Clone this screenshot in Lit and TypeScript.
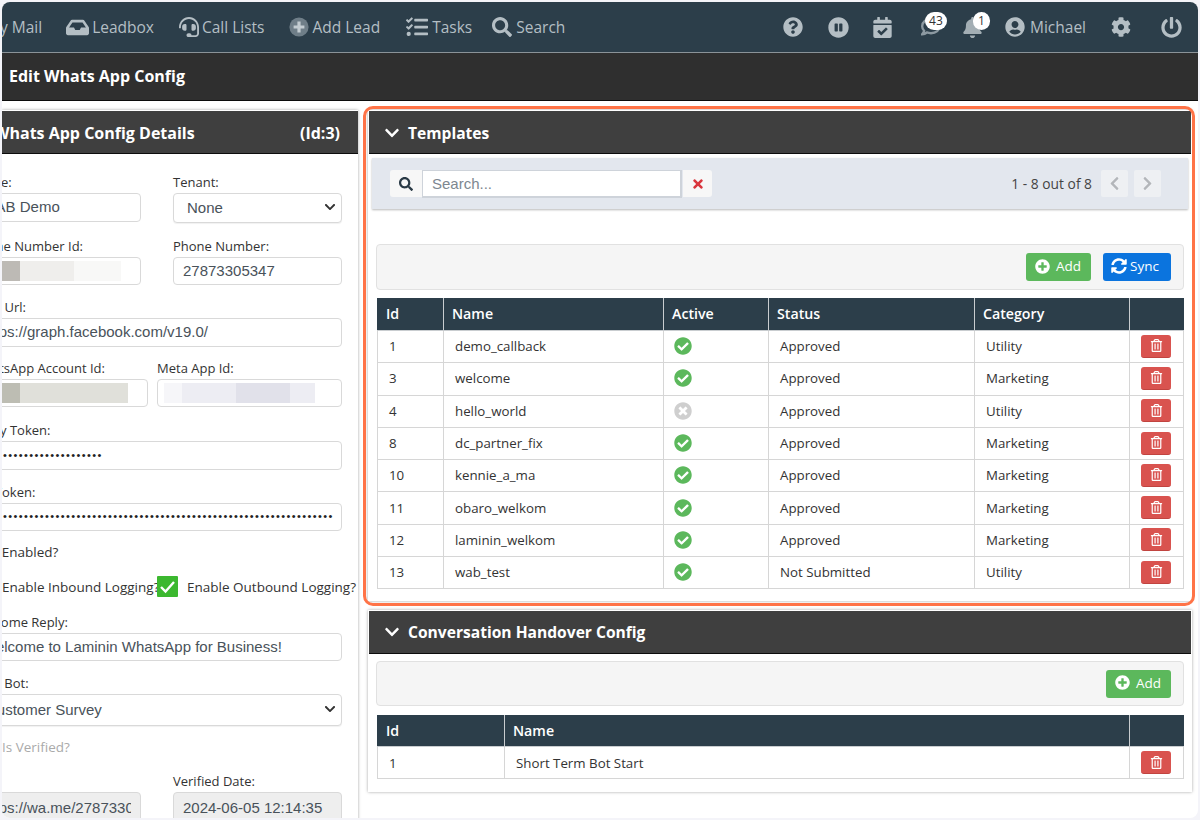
import { LitElement, html, css, svg } from "lit";
import { customElement } from "lit/decorators.js";

const P: Record<string, [number, string]> = {
  check: [512, "M504 256c0 136.967-111.033 248-248 248S8 392.967 8 256 119.033 8 256 8s248 111.033 248 248zM227.314 387.314l184-184c6.248-6.248 6.248-16.379 0-22.627l-22.627-22.627c-6.248-6.249-16.379-6.249-22.628 0L216 308.118l-70.059-70.059c-6.248-6.248-16.379-6.248-22.628 0l-22.627 22.627c-6.248 6.248-6.248 16.379 0 22.627l104 104c6.249 6.249 16.379 6.249 22.628.001z"],
  timesc: [512, "M256 8C119 8 8 119 8 256s111 248 248 248 248-111 248-248S393 8 256 8zm121.6 313.1c4.7 4.7 4.7 12.3 0 17L338 377.6c-4.7 4.7-12.3 4.7-17 0L256 312l-65.1 65.6c-4.7 4.7-12.3 4.7-17 0L134.4 338c-4.7-4.7-4.7-12.3 0-17l65.6-65-65.6-65.1c-4.7-4.7-4.7-12.3 0-17l39.6-39.6c4.7-4.7 12.3-4.7 17 0l65 65.7 65.1-65.6c4.7-4.7 12.3-4.7 17 0l39.6 39.6c4.7 4.7 4.7 12.3 0 17L312 256l65.6 65.1z"],
  plus: [512, "M256 8C119 8 8 119 8 256s111 248 248 248 248-111 248-248S393 8 256 8zm144 276c0 6.6-5.4 12-12 12h-92v92c0 6.6-5.4 12-12 12h-56c-6.6 0-12-5.4-12-12v-92h-92c-6.6 0-12-5.4-12-12v-56c0-6.6 5.4-12 12-12h92v-92c0-6.6 5.4-12 12-12h56c6.6 0 12 5.4 12 12v92h92c6.6 0 12 5.4 12 12v56z"],
  search: [512, "M505 442.7L405.3 343c-4.5-4.5-10.6-7-17-7H372c27.6-35.3 44-79.7 44-128C416 93.1 322.9 0 208 0S0 93.1 0 208s93.1 208 208 208c48.3 0 92.7-16.4 128-44v16.3c0 6.4 2.5 12.5 7 17l99.7 99.7c9.4 9.4 24.6 9.4 33.9 0l28.3-28.3c9.4-9.4 9.4-24.6.1-34zM208 336c-70.7 0-128-57.2-128-128 0-70.7 57.2-128 128-128 70.7 0 128 57.2 128 128 0 70.7-57.2 128-128 128z"],
  times: [352, "M242.72 256l100.07-100.07c12.28-12.28 12.28-32.19 0-44.48l-22.24-22.24c-12.28-12.28-32.19-12.28-44.48 0L176 189.28 75.93 89.21c-12.28-12.28-32.19-12.28-44.48 0L9.21 111.45c-12.28 12.28-12.28 32.19 0 44.48L109.28 256 9.21 356.07c-12.28 12.28-12.28 32.19 0 44.48l22.24 22.24c12.28 12.28 32.2 12.28 44.48 0L176 322.72l100.07 100.07c12.28 12.28 32.2 12.28 44.48 0l22.24-22.24c12.28-12.28 12.28-32.19 0-44.48L242.72 256z"],
  down: [448, "M207.029 381.476L12.686 187.132c-9.373-9.373-9.373-24.569 0-33.941l22.667-22.667c9.357-9.357 24.522-9.375 33.901-.04L224 284.505l154.745-154.021c9.379-9.335 24.544-9.317 33.901.04l22.667 22.667c9.373 9.373 9.373 24.569 0 33.941L240.971 381.476c-9.373 9.372-24.569 9.372-33.942 0z"],
  left: [320, "M34.52 239.03L228.87 44.69c9.37-9.37 24.57-9.37 33.94 0l22.67 22.67c9.36 9.36 9.37 24.52.04 33.9L131.49 256l154.02 154.75c9.34 9.38 9.32 24.54-.04 33.9l-22.67 22.67c-9.37 9.37-24.57 9.37-33.94 0L34.52 272.97c-9.37-9.37-9.37-24.57 0-33.94z"],
  right: [320, "M285.476 272.971L91.132 467.314c-9.373 9.373-24.569 9.373-33.941 0l-22.667-22.667c-9.357-9.357-9.375-24.522-.04-33.901L188.505 256 34.484 101.255c-9.335-9.379-9.317-24.544.04-33.901l22.667-22.667c9.373-9.373 24.569-9.373 33.941 0L285.475 239.03c9.373 9.372 9.373 24.568.001 33.941z"],
  trash: [448, "M268 416h24a12 12 0 0 0 12-12V188a12 12 0 0 0-12-12h-24a12 12 0 0 0-12 12v216a12 12 0 0 0 12 12zM432 80h-82.41l-34-56.7A48 48 0 0 0 274.41 0H173.59a48 48 0 0 0-41.16 23.3L98.41 80H16A16 16 0 0 0 0 96v16a16 16 0 0 0 16 16h16v336a48 48 0 0 0 48 48h288a48 48 0 0 0 48-48V128h16a16 16 0 0 0 16-16V96a16 16 0 0 0-16-16zM171.84 50.91A6 6 0 0 1 177 48h94a6 6 0 0 1 5.15 2.91L293.61 80H154.39zM368 464H80V128h288zm-212-48h24a12 12 0 0 0 12-12V188a12 12 0 0 0-12-12h-24a12 12 0 0 0-12 12v216a12 12 0 0 0 12 12z"],
  sync: [512, "M370.72 133.28C339.458 104.008 298.888 87.962 255.848 88c-77.458.068-144.328 53.178-162.791 126.85-1.344 5.363-6.122 9.15-11.651 9.15H24.103c-7.498 0-13.194-6.807-11.807-14.176C33.933 94.924 134.813 8 256 8c66.448 0 126.791 26.136 171.315 68.685L463.03 40.97C478.149 25.851 504 36.559 504 57.941V192c0 13.255-10.745 24-24 24H345.941c-21.382 0-32.09-25.851-16.971-40.971l41.75-41.749zM32 296h134.059c21.382 0 32.09 25.851 16.971 40.971l-41.75 41.75c31.262 29.273 71.835 45.319 114.876 45.28 77.418-.07 144.315-53.144 162.787-126.849 1.344-5.363 6.122-9.15 11.651-9.15h57.304c7.498 0 13.194 6.807 11.807 14.176C478.067 417.076 377.187 504 256 504c-66.448 0-126.791-26.136-171.315-68.685L48.97 471.03C33.851 486.149 8 475.441 8 454.059V320c0-13.255 10.745-24 24-24z"],
  question: [512, "M504 256c0 136.997-111.043 248-248 248S8 392.997 8 256C8 119.083 119.043 8 256 8s248 111.083 248 248zM262.655 90c-54.497 0-89.255 22.957-116.549 63.758-3.536 5.286-2.353 12.415 2.715 16.258l34.699 26.31c5.205 3.947 12.621 3.008 16.665-2.122 17.864-22.658 30.113-35.797 57.303-35.797 20.429 0 45.698 13.148 45.698 32.958 0 14.976-12.363 22.667-32.534 33.976C247.128 238.528 216 254.941 216 296v4c0 6.627 5.373 12 12 12h56c6.627 0 12-5.373 12-12v-1.333c0-28.462 83.186-29.647 83.186-106.667 0-58.002-60.165-102-116.531-102zM256 338c-25.365 0-46 20.635-46 46 0 25.364 20.635 46 46 46s46-20.636 46-46c0-25.365-20.635-46-46-46z"],
  pause: [512, "M256 8C119 8 8 119 8 256s111 248 248 248 248-111 248-248S393 8 256 8zm-16 328c0 8.8-7.2 16-16 16h-48c-8.8 0-16-7.2-16-16V176c0-8.8 7.2-16 16-16h48c8.8 0 16 7.2 16 16v160zm112 0c0 8.8-7.2 16-16 16h-48c-8.8 0-16-7.2-16-16V176c0-8.8 7.2-16 16-16h48c8.8 0 16 7.2 16 16v160z"],
  calendar: [448, "M436 160H12c-6.627 0-12-5.373-12-12v-36c0-26.51 21.49-48 48-48h48V12c0-6.627 5.373-12 12-12h40c6.627 0 12 5.373 12 12v52h128V12c0-6.627 5.373-12 12-12h40c6.627 0 12 5.373 12 12v52h48c26.51 0 48 21.49 48 48v36c0 6.627-5.373 12-12 12zM12 192h424c6.627 0 12 5.373 12 12v260c0 26.51-21.49 48-48 48H48c-26.51 0-48-21.49-48-48V204c0-6.627 5.373-12 12-12zm333.296 95.947l-28.169-28.398c-4.667-4.705-12.265-4.736-16.97-.068L194.12 364.665l-45.98-46.352c-4.667-4.705-12.266-4.736-16.971-.068l-28.397 28.17c-4.705 4.667-4.736 12.265-.068 16.97l82.601 83.269c4.667 4.705 12.265 4.736 16.97.068l142.953-141.805c4.705-4.667 4.736-12.265.068-16.97z"],
  user: [496, "M248 8C111 8 0 119 0 256s111 248 248 248 248-111 248-248S385 8 248 8zm0 96c48.6 0 88 39.4 88 88s-39.4 88-88 88-88-39.4-88-88 39.4-88 88-88zm0 344c-58.7 0-111.3-26.6-146.5-68.2 18.8-35.4 55.6-59.8 98.5-59.8 2.4 0 4.8.4 7.1 1.1 13 4.2 26.6 6.9 40.9 6.9 14.3 0 28-2.7 40.9-6.9 2.3-.7 4.7-1.1 7.1-1.1 42.9 0 79.7 24.4 98.5 59.8C359.3 421.4 306.7 448 248 448z"],
  bell: [448, "M224 512c35.32 0 63.97-28.65 63.97-64H160.03c0 35.35 28.65 64 63.97 64zm215.39-149.71c-19.32-20.76-55.47-51.99-55.47-154.29 0-77.7-54.48-139.9-127.94-155.16V32c0-17.67-14.32-32-31.98-32s-31.98 14.33-31.98 32v20.84C118.56 68.1 64.08 130.3 64.08 208c0 102.3-36.15 133.53-55.47 154.29-6 6.45-8.66 14.16-8.61 21.71.11 16.4 12.98 32 32.1 32h383.8c19.12 0 32-15.6 32.1-32 .05-7.55-2.61-15.27-8.61-21.71z"],
  cog: [512, "M487.4 315.7l-42.6-24.6c4.3-23.2 4.3-47 0-70.2l42.6-24.6c4.9-2.8 7.1-8.6 5.5-14-11.1-35.6-30-67.8-54.7-94.6-3.8-4.1-10-5.1-14.8-2.3L380.8 110c-17.9-15.4-38.5-27.3-60.8-35.1V25.8c0-5.6-3.9-10.5-9.4-11.7-36.7-8.2-74.3-7.8-109.2 0-5.5 1.2-9.4 6.1-9.4 11.7V75c-22.2 7.9-42.8 19.8-60.8 35.1L88.7 85.5c-4.9-2.8-11-1.9-14.8 2.3-24.7 26.7-43.6 58.9-54.7 94.6-1.7 5.4.6 11.2 5.5 14L67.3 221c-4.3 23.2-4.3 47 0 70.2l-42.6 24.6c-4.9 2.8-7.1 8.6-5.5 14 11.1 35.6 30 67.8 54.7 94.6 3.8 4.1 10 5.1 14.8 2.3l42.6-24.6c17.9 15.4 38.5 27.3 60.8 35.1v49.2c0 5.6 3.9 10.5 9.4 11.7 36.7 8.2 74.3 7.8 109.2 0 5.5-1.2 9.4-6.1 9.4-11.7v-49.2c22.2-7.9 42.8-19.8 60.8-35.1l42.6 24.6c4.9 2.8 11 1.9 14.8-2.3 24.7-26.7 43.6-58.9 54.7-94.6 1.5-5.5-.7-11.3-5.6-14.1zM256 336c-44.1 0-80-35.9-80-80s35.9-80 80-80 80 35.9 80 80-35.9 80-80 80z"],
  power: [512, "M400 54.1c63 45 104 118.6 104 201.9 0 136.8-110.8 247.7-247.5 248C120 504.3 8.2 393 8 256.4 7.9 173.1 48.9 99.3 111.8 54.2c11.7-8.3 28-4.8 35 7.7L162.6 90c5.9 10.5 3.1 23.8-6.6 31-41.5 30.8-68 79.6-68 134.9-.1 92.3 74.5 168.1 168 168.1 91.6 0 168.6-74.2 168-169.1-.3-51.8-24.7-101.8-68.1-134-9.7-7.2-12.4-20.5-6.5-30.9l15.8-28.1c7-12.4 23.2-16.1 34.8-7.8zM296 264V24c0-13.3-10.7-24-24-24h-32c-13.3 0-24 10.7-24 24v240c0 13.3 10.7 24 24 24h32c13.3 0 24-10.7 24-24z"],
  inbox: [576, "M567.938 243.908L462.25 85.374A48.003 48.003 0 0 0 422.311 64H153.689a48 48 0 0 0-39.938 21.374L8.062 243.908A47.994 47.994 0 0 0 0 270.533V400c0 26.51 21.49 48 48 48h480c26.51 0 48-21.49 48-48V270.533a47.994 47.994 0 0 0-8.062-26.625zM162.252 128h251.497l85.333 128H376l-32 64H232l-32-64H76.918l85.334-128z"],
  headset: [512, "M192 208c0-17.67-14.33-32-32-32h-16c-35.35 0-64 28.65-64 64v48c0 35.35 28.65 64 64 64h16c17.67 0 32-14.33 32-32V208zm176 144c35.35 0 64-28.65 64-64v-48c0-35.35-28.65-64-64-64h-16c-17.67 0-32 14.33-32 32v112c0 17.67 14.33 32 32 32h16zM256 0C113.18 0 4.58 118.83 0 256v16c0 8.84 7.16 16 16 16h16c8.84 0 16-7.16 16-16v-16c0-114.69 93.31-208 208-208s208 93.31 208 208h-.12c.08 2.43.12 165.72.12 165.72 0 23.35-18.93 42.28-42.28 42.28H320c0-26.51-21.49-48-48-48h-32c-26.51 0-48 21.49-48 48s21.49 48 48 48h181.72c49.86 0 90.28-40.42 90.28-90.28V256C507.42 118.83 398.82 0 256 0z"],
  tasks: [512, "M139.61 35.5a12 12 0 0 0-17 0L58.93 98.81l-22.7-22.12a12 12 0 0 0-17 0L3.53 92.41a12 12 0 0 0 0 17l47.59 47.4a12.78 12.78 0 0 0 17.61 0l15.59-15.62L156.52 69a12.09 12.09 0 0 0 .09-17zm0 159.19a12 12 0 0 0-17 0l-63.68 63.72-22.7-22.1a12 12 0 0 0-17 0L3.53 252a12 12 0 0 0 0 17L51 316.5a12.77 12.77 0 0 0 17.6 0l15.7-15.69 72.2-72.22a12 12 0 0 0 .09-16.9zM64 368c-26.49 0-48.59 21.5-48.59 48S37.53 464 64 464a48 48 0 0 0 0-96zm432 16H208a16 16 0 0 0-16 16v32a16 16 0 0 0 16 16h288a16 16 0 0 0 16-16v-32a16 16 0 0 0-16-16zm0-320H208a16 16 0 0 0-16 16v32a16 16 0 0 0 16 16h288a16 16 0 0 0 16-16V80a16 16 0 0 0-16-16zm0 160H208a16 16 0 0 0-16 16v32a16 16 0 0 0 16 16h288a16 16 0 0 0 16-16v-32a16 16 0 0 0-16-16z"],
};

function icon(name: string, size: number) {
  const [w, d] = P[name];
  return html`<svg class="ic" width=${size} height=${size} viewBox="0 0 ${w} 512" fill="currentColor">${svg`<path d=${d}></path>`}</svg>`;
}

const chat = html`<svg class="ic chat" width="20" height="20" viewBox="0 0 512 512" fill="none" stroke="currentColor" stroke-width="60">${svg`<path d="M256 50C130 50 30 130 30 235c0 45 19 85 50 116-9 35-30 66-50 90 40-3 85-18 118-45 33 12 70 19 108 19 126 0 226-80 226-180S382 50 256 50z"></path>`}</svg>`;

const navPlus = html`<svg class="ic" width="20" height="20" viewBox="0 0 20 20">${svg`<circle cx="10" cy="10" r="9.6" fill="#6f7e88"></circle><path d="M8.4 4.6h3.2v3.8h3.8v3.2h-3.8v3.8H8.4v-3.8H4.6V8.4h3.8z" fill="#c3ccd1"></path>`}</svg>`;

const TEMPLATES: [string, string, boolean, string, string][] = [
  ["1", "demo_callback", true, "Approved", "Utility"],
  ["3", "welcome", true, "Approved", "Marketing"],
  ["4", "hello_world", false, "Approved", "Utility"],
  ["8", "dc_partner_fix", true, "Approved", "Marketing"],
  ["10", "kennie_a_ma", true, "Approved", "Marketing"],
  ["11", "obaro_welkom", true, "Approved", "Marketing"],
  ["12", "laminin_welkom", true, "Approved", "Marketing"],
  ["13", "wab_test", true, "Not Submitted", "Utility"],
];

@customElement("app-root")
export class AppRoot extends LitElement {
  static styles = css`
    :host { display: block; width: 1200px; height: 820px; background: #f4f4f9; overflow: hidden;
      font-family: "Open Sans", "Noto Sans", sans-serif; color: #333; font-size: 13px; }
    * { box-sizing: border-box; }
    .ic { display: block; flex: none; }
    .frame { position: relative; margin: 2px 2px 0; width: 1196px; height: 816px; background: #fff; border-radius: 8px; overflow: hidden; }

    .nav { height: 51px; background: #2c3e4a; border-bottom: 1px solid #8b9398; display: flex; align-items: center; color: #b4bec4; font-size: 15.5px; padding-right: 16px; white-space: nowrap; }
    .navl { display: flex; align-items: center; margin-left: -16px; }
    .navr { display: flex; align-items: center; margin-left: auto; }
    .ni { display: flex; align-items: center; gap: 3px; position: relative; }
    .chat { color: #8c99a1; }
    .dim { color: #a3aeb4; }
    .g5 { gap: 5px; }
    .g4 { gap: 4px; }
    .badge { position: absolute; background: #fff; color: #333; font-size: 12px; line-height: 18px; height: 18px; border-radius: 9px; text-align: center; }
    .b43 { left: 4px; top: -5px; width: 22px; }
    .b1 { left: 11px; top: -5px; width: 17px; }
    .title { height: 48px; background: #2f2f2f; border-bottom: 1px solid #0c0c0c; display: flex; align-items: center; padding: 0 0 2px 7px; color: #fff; font-weight: 700; font-size: 16px; }

    .main { display: flex; align-items: flex-start; gap: 10px; padding: 9px 6px 0 0; }
    .left { width: 356px; height: 720px; flex: none; background: #fff; box-shadow: 0 0 3px rgba(0,0,0,.35); overflow: hidden; }
    .right { width: 824px; flex: none; display: flex; flex-direction: column; gap: 9px; }
    .phead { height: 43px; margin-top: 1px; background: #3f3f3f; border-bottom: 1px solid #0c0c0c; color: #fff; font-weight: 700; font-size: 15.6px; display: flex; align-items: center; white-space: nowrap; padding-top: 1px; }
    .lhead { justify-content: space-between; padding-right: 18px; margin-left: -8px; font-size: 16px; }
    .form { margin-left: -30px; width: 370px; padding-top: 20px; font-size: 13px; }
    .row { display: flex; gap: 32px; }
    .col { flex: 1 1 0; min-width: 0; }
    .row.acct { gap: 9px; }
    .acct .c1 { flex: none; width: 176px; }
    .lab { height: 19px; line-height: 17px; white-space: nowrap; }
    .inp { height: 28px; border: 1px solid #d9d9d9; border-radius: 4px; font-family: "Liberation Sans", Arial, sans-serif; font-size: 15px; color: #49525a; padding: 0 9px 2px; display: flex; align-items: center; overflow: hidden; white-space: nowrap; background: #fff; }
    .h29 { height: 29px; }
    .sel { justify-content: space-between; padding: 0 5px 2px 13px; box-shadow: 0 1px 1px rgba(0,0,0,.06); }
    .dis { background: #eeeeee; height: 32px; }
    .clip { overflow: hidden; display: block; width: 100%; }
    .dots { color: #222; font-size: 11px; letter-spacing: 1.4px; }
    .blur { display: flex; height: 20px; flex: none; position: relative; top: 1px; }
    .blur i { display: block; height: 100%; }
    .chk { display: flex; align-items: center; height: 21px; white-space: nowrap; font-size: 13.5px; }
    .t20 { height: 20px; line-height: 20px; white-space: nowrap; font-size: 13.5px; }
    .pad { padding-left: 30px; }
    .pad2 { padding-left: 16px; }
    .muted { color: #aaa; }
    .cb { width: 21px; height: 21px; background: #3cb82f; color: #fff; display: flex; align-items: center; justify-content: center; flex: none; margin: 0 9px 0 -2px; border-radius: 1px; }
    .il { width: 157px; flex: none; }
    .chev { color: #333; }

    .panel { background: #fff; box-shadow: 0 0 3px rgba(0,0,0,.35); }
    .rhead { padding-left: 15px; gap: 8px; margin-left: 1px; margin-right: 1px; }
    .p2 .rhead { padding-top: 0; }
    .bar { margin: 4px 4px 0; height: 51px; background: #e3e7ee; box-shadow: 0 1px 2px rgba(0,0,0,.28); display: flex; align-items: center; padding: 0 27px 0 18px; }
    .addon { height: 27px; background: #f7f7f7; display: flex; align-items: center; justify-content: center; color: #2a3a46; }
    .a1 { width: 32px; border-radius: 3px 0 0 3px; }
    .a2 { width: 29px; border-radius: 0 3px 3px 0; color: #d9363e; margin-left: 1px; }
    .sinp { width: 260px; height: 28px; background: #fff; border: 2px solid #ced3da; border-width: 1px 2px 2px 1px; font-family: "Liberation Sans", Arial, sans-serif; font-size: 15px; color: #7d8790; display: flex; align-items: center; padding-left: 9px; }
    .count { margin-left: auto; margin-right: 9px; font-size: 13.8px; color: #444; }
    .pg { width: 27px; height: 27px; background: #eef0f3; color: #b3b6ba; display: flex; align-items: center; justify-content: center; border-radius: 2px; }
    .pg + .pg { margin-left: 6px; }
    .well { height: 46px; margin: 0 8px; background: #f5f5f5; border: 1px solid #e1e1e1; border-radius: 4px; display: flex; align-items: center; justify-content: flex-end; padding-right: 12px; gap: 12px; }
    .btn { height: 28px; border-radius: 3px; color: #fff; display: flex; align-items: center; font-size: 13.5px; font-weight: 500; padding-bottom: 2px; }
    .add { width: 65px; background: #5cb85c; padding-left: 9px; gap: 6px; }
    .sync { width: 68px; background: #0b74de; padding-left: 8px; gap: 3px; }
    .s35 { margin-top: 35px; }
    .s7 { margin-top: 7px; height: 45px; }
    .tw { margin: 8px 0 0 9px; }
    .tw2 { margin-top: 9px; }
    table { border-collapse: collapse; width: 806px; table-layout: fixed; font-size: 13.3px; }
    th { background: #2c3e4a; color: #fff; font-weight: 600; font-size: 14.2px; text-align: left; padding: 0 8px 2px; height: 32px; border: 1px solid #c9cdd0; border-top-color: #2c3e4a; }
    th:first-child { border-left-color: #2c3e4a; }
    th:last-child { border-right-color: #2c3e4a; }
    td { height: 32.3px; padding: 0 0 1px 11px; border: 1px solid #d6d6d6; color: #333; }
    .one th { height: 31px; }
    .one td { height: 32px; padding-bottom: 0; }
    .acell { padding-left: 11px; }
    .tc { padding-left: 10px; }
    .on { color: #5cb85c; display: block; }
    .off { color: #cfcfcf; display: block; }
    .del { width: 30px; height: 23px; background: #d9534f; border-bottom: 1px solid #c14440; border-radius: 3px; color: #fff; display: flex; align-items: center; justify-content: center; }
    .p1 { padding-bottom: 12px; }
    .p2 { padding-bottom: 13px; }
    .hl { position: absolute; left: 361px; top: 104px; width: 832px; height: 500px; border: 3.5px solid #ff7347; border-radius: 10px; pointer-events: none; }
  `;

  field(label: string, cls: string, body: unknown) {
    return html`<div class="col ${cls}"><div class="lab">${label}</div>${body}</div>`;
  }
  chev() { return html`<span class="chev">${icon("down", 12)}</span>`; }
  blur(parts: [number, string][]) {
    return html`<div class="blur">${parts.map(([w, c]) => html`<i style="width:${w}px;background:${c}"></i>`)}</div>`;
  }
  dots(n: number) { return html`<span class="dots">${"•".repeat(n)}</span>`; }

  table(head: string[], widths: number[], rows: unknown[], cls = "") {
    return html`<table class=${cls}><colgroup>${widths.map((w) => html`<col style="width:${w}px" />`)}</colgroup>
      <thead><tr>${head.map((h) => html`<th>${h}</th>`)}</tr></thead><tbody>${rows}</tbody></table>`;
  }
  delBtn() { return html`<td class="acell"><div class="del">${icon("trash", 13)}</div></td>`; }

  render() {
    const m = (v: number) => `margin-left:${v}px`;
    return html`<div class="frame">
      <div class="nav">
        <div class="navl">
          <div class="ni">My Mail</div>
          <div class="ni" style=${m(24)}>${icon("inbox", 23)}<span>Leadbox</span></div>
          <div class="ni" style=${m(25)}>${icon("headset", 20)}<span>Call Lists</span></div>
          <div class="ni" style=${m(25)}>${navPlus}<span>Add Lead</span></div>
          <div class="ni g4" style=${m(26)}>${icon("tasks", 22)}<span>Tasks</span></div>
          <div class="ni g4" style=${m(20)}>${icon("search", 20)}<span>Search</span></div>
        </div>
        <div class="navr">
          <div class="ni">${icon("question", 20)}</div>
          <div class="ni" style=${m(25)}>${icon("pause", 21)}</div>
          <div class="ni" style=${m(23)}>${icon("calendar", 21)}</div>
          <div class="ni" style=${m(28)}>${chat}<span class="badge b43">43</span></div>
          <div class="ni dim" style=${m(21)}>${icon("bell", 21)}<span class="badge b1">1</span></div>
          <div class="ni g5" style=${m(22)}>${icon("user", 20)}<span>Michael</span></div>
          <div class="ni" style=${m(25)}>${icon("cog", 20)}</div>
          <div class="ni" style=${m(30)}>${icon("power", 21)}</div>
        </div>
      </div>
      <div class="title">Edit Whats App Config</div>
      <div class="main">
        <div class="left">
          <div class="phead lhead"><span>Whats App Config Details</span><span>(Id:3)</span></div>
          <div class="form">
            <div class="row">
              ${this.field("Name:", "", html`<div class="inp h29">WAB Demo</div>`)}
              ${this.field("Tenant:", "", html`<div class="inp sel" style="height:30px"><span>None</span>${this.chev()}</div>`)}
            </div>
            <div class="row" style="margin-top:15px">
              ${this.field("Phone Number Id:", "", html`<div class="inp">${this.blur([[12, "#fff"], [26, "#bdbab5"], [54, "#efeeec"], [47, "#f8f8f7"]])}</div>`)}
              ${this.field("Phone Number:", "", html`<div class="inp">27873305347</div>`)}
            </div>
            <div class="row" style="margin-top:14px">
              ${this.field("Base Url:", "", html`<div class="inp h29">https://graph.facebook.com/v19.0/</div>`)}
            </div>
            <div class="row acct" style="margin-top:13px">
              ${this.field("WhatsApp Account Id:", "c1", html`<div class="inp">${this.blur([[11, "#fff"], [27, "#bdbdb3"], [108, "#e0e0da"]])}</div>`)}
              ${this.field("Meta App Id:", "", html`<div class="inp" style="padding-left:6px">${this.blur([[18, "#f6f6f9"], [54, "#ededf3"], [54, "#e1e1ea"], [25, "#ededf3"]])}</div>`)}
            </div>
            <div class="row" style="margin-top:15px">
              ${this.field("Verify Token:", "", html`<div class="inp h29">${this.dots(23)}</div>`)}
            </div>
            <div class="row" style="margin-top:14px">
              ${this.field("Api Token:", "", html`<div class="inp">${this.dots(67)}</div>`)}
            </div>
            <div class="t20 pad2" style="margin-top:11px">Is Enabled?</div>
            <div class="chk pad" style="margin-top:14px">
              <span class="il">Enable Inbound Logging?</span>
              <span class="cb"><svg width="17" height="17" viewBox="0 0 17 17" fill="none" stroke="#fff" stroke-width="2.4">${svg`<path d="M2 9l4.5 4.5L15 4"></path>`}</svg></span>
              <span>Enable Outbound Logging?</span>
            </div>
            <div class="row" style="margin-top:17px">
              ${this.field("Welcome Reply:", "", html`<div class="inp">Welcome to Laminin WhatsApp for Business!</div>`)}
            </div>
            <div class="row" style="margin-top:14px">
              ${this.field("Start Bot:", "", html`<div class="inp sel" style="height:32px"><span>Customer Survey</span>${this.chev()}</div>`)}
            </div>
            <div class="t20 pad muted" style="margin-top:11px">Is Verified?</div>
            <div class="row" style="margin-top:16px">
              ${this.field("Link:", "", html`<div class="inp dis"><span class="clip">https://wa.me/27873305347</span></div>`)}
              ${this.field("Verified Date:", "", html`<div class="inp dis">2024-06-05 12:14:35</div>`)}
            </div>
          </div>
        </div>
        <div class="right">
          <div class="panel p1">
            <div class="phead rhead">${icon("down", 16)}<span>Templates</span></div>
            <div class="bar">
              <div class="addon a1">${icon("search", 14)}</div>
              <div class="sinp">Search...</div>
              <div class="addon a2">${icon("times", 14)}</div>
              <span class="count">1 - 8 out of 8</span>
              <div class="pg">${icon("left", 15)}</div>
              <div class="pg">${icon("right", 15)}</div>
            </div>
            <div class="well s35">
              <div class="btn add">${icon("plus", 15)}<span>Add</span></div>
              <div class="btn sync">${icon("sync", 16)}<span>Sync</span></div>
            </div>
            <div class="tw">
              ${this.table(["Id", "Name", "Active", "Status", "Category", ""], [66, 220, 105, 206, 155, 54],
                TEMPLATES.map(([id, name, on, status, cat]) => html`<tr>
                  <td>${id}</td><td>${name}</td>
                  <td class="tc"><span class=${on ? "on" : "off"}>${icon(on ? "check" : "timesc", 18)}</span></td>
                  <td>${status}</td><td>${cat}</td>${this.delBtn()}</tr>`))}
            </div>
          </div>
          <div class="panel p2">
            <div class="phead rhead">${icon("down", 16)}<span>Conversation Handover Config</span></div>
            <div class="well s7">
              <div class="btn add">${icon("plus", 15)}<span>Add</span></div>
            </div>
            <div class="tw tw2">
              ${this.table(["Id", "Name", ""], [127, 625, 54],
                [html`<tr><td>1</td><td>Short Term Bot Start</td>${this.delBtn()}</tr>`], "one")}
            </div>
          </div>
        </div>
      </div>
      <div class="hl"></div>
    </div>`;
  }
}
